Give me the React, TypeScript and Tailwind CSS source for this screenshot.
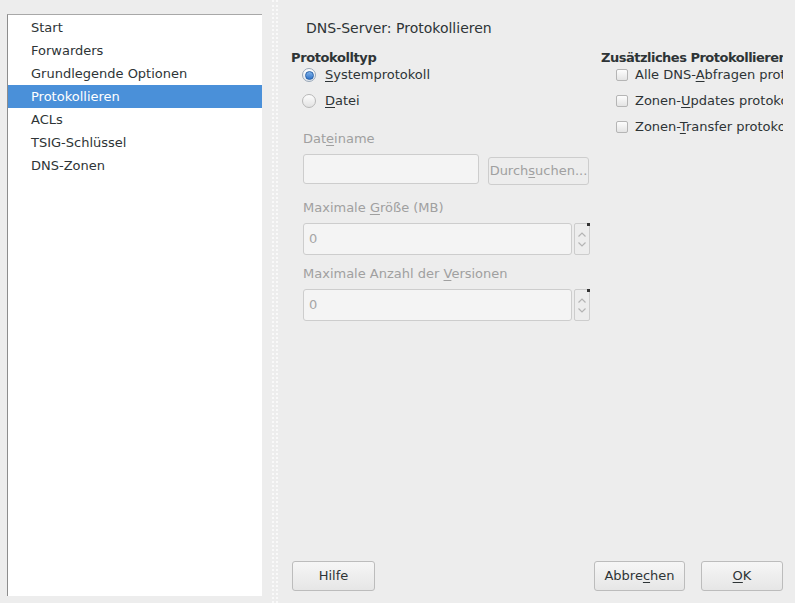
import React from 'react'

const navItems = [
  'Start',
  'Forwarders',
  'Grundlegende Optionen',
  'Protokollieren',
  'ACLs',
  'TSIG-Schlüssel',
  'DNS-Zonen',
]

function U({ children }: { children: React.ReactNode }) {
  return <span className="underline underline-offset-2 decoration-1">{children}</span>
}

function Radio({ checked }: { checked?: boolean }) {
  return checked ? (
    <span className="w-[14px] h-[14px] rounded-full border border-[#9aa8b8] bg-gradient-to-b from-[#ffffff] to-[#dfe6ee] flex items-center justify-center shrink-0">
      <span className="w-[9px] h-[9px] rounded-full bg-gradient-to-b from-[#7fb2ea] to-[#2f74c9] border border-[#2a62a8]" />
    </span>
  ) : (
    <span className="w-[14px] h-[14px] rounded-full border border-[#b8b8b8] bg-gradient-to-b from-[#fdfdfd] to-[#e2e2e2] shrink-0" />
  )
}

function Check() {
  return (
    <span className="w-[12px] h-[12px] rounded-[2px] border border-[#b5b5b5] bg-gradient-to-b from-[#fdfdfd] to-[#e4e4e4] shrink-0" />
  )
}

function SpinField() {
  return (
    <div className="flex items-stretch h-[32px] mt-[7px]">
      <div className="w-[269px] h-[32px] rounded-[3px] border border-[#cdcdcd] bg-[#f4f4f4] flex items-center pl-[5px] text-[#a6a6a6]">
        0
      </div>
      <div className="relative ml-[2px] w-[16px] h-[32px] border border-[#cdcdcd] rounded-[2px] flex flex-col items-center justify-center gap-[5px]">
        <svg width="8" height="5" viewBox="0 0 8 5" fill="none" stroke="#b4b4b4" strokeWidth="1.2">
          <path d="M0.5 4.5 L4 1 L7.5 4.5" />
        </svg>
        <svg width="8" height="5" viewBox="0 0 8 5" fill="none" stroke="#b4b4b4" strokeWidth="1.2">
          <path d="M0.5 0.5 L4 4 L7.5 0.5" />
        </svg>
        <span className="absolute -top-px -right-px w-[3px] h-[3px] bg-[#333]" />
      </div>
    </div>
  )
}

export default function App() {
  return (
    <div className="w-[795px] h-[603px] bg-[#ededed] flex overflow-hidden text-[13px] text-[#2e3436] font-['DejaVu_Sans',sans-serif] leading-[16px]">
      {/* sidebar */}
      <div className="ml-[7px] mt-[14px] w-[255px] h-[582px] bg-white border-l border-t border-l-[#8d8d8d] border-t-[#a8a8a8] pt-[1px]">
        {navItems.map((item) => (
          <div
            key={item}
            className={`h-[23px] flex items-center pl-[23px] ${
              item === 'Protokollieren' ? 'bg-[#4a90d9] text-white' : ''
            }`}
          >
            {item}
          </div>
        ))}
      </div>

      {/* separator */}
      <div className="ml-[10px] w-[6px] h-full border-x-2 border-dotted border-[#f9f9f9]" />

      {/* main */}
      <div className="flex-1 flex flex-col min-w-0">
        <div className="pl-[28px] pt-[19px] h-[50px] text-[14px] leading-[18px]">DNS-Server: Protokollieren</div>

        <div className="flex">
          {/* left column */}
          <div className="pl-[13px] w-[323px] shrink-0">
            <div className="font-bold tracking-[-0.4px]">Protokolltyp</div>
            <div className="pl-[11px] flex items-center gap-[9px] h-[20px] mt-[-1px]">
              <Radio checked />
              <span>
                <U>S</U>ystemprotokoll
              </span>
            </div>
            <div className="pl-[11px] flex items-center gap-[9px] h-[20px] mt-[6px]">
              <Radio />
              <span>
                <U>D</U>atei
              </span>
            </div>

            <div className="pl-[12px] text-[#a0a0a0]">
              <div className="mt-[20px]">
                Dat<U>e</U>iname
              </div>
              <div className="flex items-start mt-[7px]">
                <div className="w-[176px] h-[30px] rounded-[3px] border border-[#cdcdcd] bg-[#f4f4f4]" />
                <div className="ml-[9px] mt-[3px] w-[101px] h-[28px] rounded-[3px] border border-[#cdcdcd] flex items-center justify-center text-[#a0a0a0]">
                  Durch<U>s</U>uchen...
                </div>
              </div>
              <div className="mt-[15px]">
                Maximale <U>G</U>röße (MB)
              </div>
              <SpinField />
              <div className="mt-[11px]">
                Maximale Anzahl der <U>V</U>ersionen
              </div>
              <SpinField />
            </div>
          </div>

          {/* right column */}
          <div className="w-[182px] overflow-hidden whitespace-nowrap">
            <div className="font-bold tracking-[-0.5px]">Zusätzliches Protokollieren</div>
            <div className="pl-[15px] flex items-center gap-[7px] h-[20px] mt-[-1px]">
              <Check />
              <span>
                Alle DNS-<U>A</U>bfragen protokollieren
              </span>
            </div>
            <div className="pl-[15px] flex items-center gap-[7px] h-[20px] mt-[6px]">
              <Check />
              <span>
                Zonen-<U>U</U>pdates protokollieren
              </span>
            </div>
            <div className="pl-[15px] flex items-center gap-[7px] h-[20px] mt-[6px]">
              <Check />
              <span>
                Zonen-<U>T</U>ransfer protokollieren
              </span>
            </div>
          </div>
        </div>

        <div className="flex-1" />

        {/* buttons */}
        <div className="flex items-center pl-[14px] pr-[12px] pb-[12px]">
          <button className="w-[83px] h-[30px] rounded-[3px] border border-[#bcbcbc] bg-gradient-to-b from-[#f6f6f6] to-[#e6e6e6]">
            Hilfe
          </button>
          <div className="flex-1" />
          <button className="w-[91px] h-[30px] rounded-[3px] border border-[#bcbcbc] bg-gradient-to-b from-[#f6f6f6] to-[#e6e6e6]">
            Abbre<U>c</U>hen
          </button>
          <button className="ml-[16px] w-[82px] h-[30px] rounded-[3px] border border-[#bcbcbc] bg-gradient-to-b from-[#f6f6f6] to-[#e6e6e6]">
            <U>O</U>K
          </button>
        </div>
      </div>
    </div>
  )
}
